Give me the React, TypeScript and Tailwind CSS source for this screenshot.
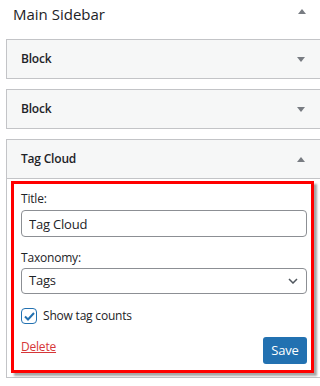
import { useState } from "react";

const Arrow = ({ up }: { up?: boolean }) => (
  <svg width="8" height="5" viewBox="0 0 8 5" className="text-[#787c82]">
    <path d={up ? "M0 5L4 0L8 5Z" : "M0 0H8L4 5Z"} fill="currentColor" />
  </svg>
);

const BoxHeader = ({ title, open }: { title: string; open?: boolean }) => (
  <div
    className={`h-[38px] bg-[#f6f7f7] flex items-center justify-between pl-[14px] pr-[20px] ${
      open ? "border-b border-[#c3c4c7] h-[39px]" : ""
    }`}
  >
    <span className="text-[12px] font-semibold tracking-[-0.2px]">{title}</span>
    <Arrow up={open} />
  </div>
);

export default function App() {
  const [title, setTitle] = useState("Tag Cloud");
  const [counts, setCounts] = useState(true);

  return (
    <div className="w-[320px] h-[386px] overflow-hidden bg-white text-[#1d2327] font-['Open_Sans',sans-serif]">
      {/* heading */}
      <div className="h-[39px] flex items-start justify-between pl-[13px] pr-[14px]">
        <h2 className="text-[15px] leading-[24px] pt-[2px]">Main Sidebar</h2>
        <div className="mt-[9px]">
          <Arrow up />
        </div>
      </div>

      <div className="pl-[6px] flex flex-col gap-[10px]">
        <div className="w-[320px] border border-[#c3c4c7]">
          <BoxHeader title="Block" />
        </div>
        <div className="w-[320px] border border-[#c3c4c7]">
          <BoxHeader title="Block" />
        </div>

        {/* open widget */}
        <div className="w-[320px] border border-[#c3c4c7]">
          <BoxHeader title="Tag Cloud" open />
          <div className="pl-[4px] pt-[2px] pb-[4px]">
            <div className="w-[303px] h-[192px] border-[3px] border-[#ff0000] shadow-[3px_3px_2px_rgba(0,0,0,0.35)] pl-[7px] pr-[4px] pt-[6px] text-[12px] tracking-[-0.2px]">
              <label className="block leading-[18px]">Title:</label>
              <input
                value={title}
                onChange={(e) => setTitle(e.target.value)}
                className="mt-[2px] w-full h-[27px] border border-[#8c8f94] rounded-[4px] px-[7px] text-[13px] tracking-[-0.2px] outline-none"
              />

              <label className="block leading-[18px] mt-[12px]">Taxonomy:</label>
              <div className="mt-[1px] h-[26px] border border-[#8c8f94] rounded-[4px] flex items-center justify-between pl-[7px] pr-[8px] text-[13px]">
                <span>Tags</span>
                <svg width="10" height="6" viewBox="0 0 10 6" fill="none">
                  <path d="M1 1L5 5L9 1" stroke="#50575e" strokeWidth="1.5" />
                </svg>
              </div>

              <label className="mt-[14px] h-[16px] flex items-center gap-[6px] cursor-pointer">
                <span
                  onClick={() => setCounts(!counts)}
                  className="w-[16px] h-[16px] border-[1.5px] border-[#2271b1] rounded-[4px] flex items-center justify-center"
                >
                  {counts && (
                    <svg width="11" height="9" viewBox="0 0 11 9" fill="none">
                      <path d="M1 4.5L4 7.5L10 1" stroke="#2271b1" strokeWidth="2" />
                    </svg>
                  )}
                </span>
                <span className="leading-[18px]">Show tag counts</span>
              </label>

              <div className="mt-[13px] flex items-start justify-between">
                <a href="#" className="text-[#d63638] underline leading-[18px] pt-[1px]">
                  Delete
                </a>
                <button className="w-[44px] h-[27px] bg-[#2271b1] text-white rounded-[3px] text-[13px]">
                  Save
                </button>
              </div>
            </div>
          </div>
        </div>
      </div>
    </div>
  );
}
